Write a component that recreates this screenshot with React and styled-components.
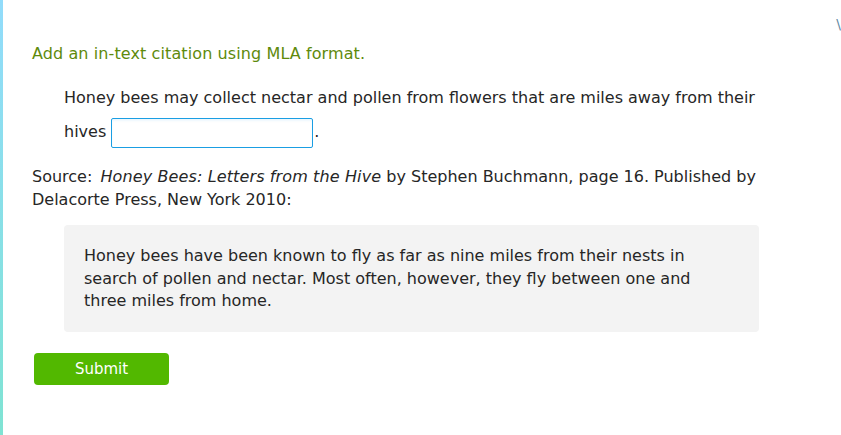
import React from "react"
import styled, { createGlobalStyle } from "styled-components"

const GlobalStyle = createGlobalStyle`
  html, body {
    margin: 0;
    padding: 0;
    background: #ffffff;
  }
  body {
    font-family: "DejaVu Sans", Verdana, sans-serif;
    color: #262626;
  }
`

// card with the coloured strip on its left edge
const Card = styled.div`
  position: relative;
  width: 841px;
  height: 435px;
  box-sizing: border-box;
  border-left: 3px solid transparent;
  border-top-left-radius: 4px;
  border-image: linear-gradient(to bottom, #92dcfb, #7fe3d3) 1;
  padding: 43px 0 0 29px;
  overflow: hidden;
`

const Corner = styled.span`
  position: absolute;
  top: 16px;
  right: 0;
  font-size: 14px;
  color: #5f8aa3;
`

const Prompt = styled.h2`
  margin: 0;
  font-size: 16px;
  font-weight: normal;
  line-height: 22px;
  letter-spacing: 0.1px;
  color: #5e8a0c;
`

const Sentence = styled.p`
  margin: 16px 0 0 32px;
  width: 705px;
  font-size: 16px;
  line-height: 34px;
`

const Blank = styled.input`
  box-sizing: border-box;
  width: 202px;
  height: 30px;
  margin: 0 1px 0 5px;
  vertical-align: middle;
  border: 1px solid #1a9ee3;
  border-radius: 2px;
  box-shadow: inset 0 2px 2px rgba(26, 158, 227, 0.08);
  background: #fff;
  font: inherit;
  outline: none;
`

const Source = styled.p`
  margin: 16px 0 0 0;
  width: 740px;
  font-size: 16px;
  line-height: 23px;
`

const Title = styled.em`
  margin-left: 3px;
  letter-spacing: 0.12px;
`

const Quote = styled.blockquote`
  box-sizing: border-box;
  margin: 14px 0 0 32px;
  width: 695px;
  height: 107px;
  padding: 20px 24px 0 20px;
  background: #f3f3f3;
  border-radius: 4px;
  font-size: 16px;
  line-height: 22.5px;
`

const SubmitButton = styled.button`
  display: block;
  margin: 21px 0 0 2px;
  width: 135px;
  height: 32px;
  border: none;
  border-radius: 4px;
  background: #52b800;
  color: #ffffff;
  font-family: "DejaVu Sans", Verdana, sans-serif;
  font-size: 15px;
  cursor: pointer;
`

export default function App() {
  return (
    <>
      <GlobalStyle />
      <Card>
        <Corner>\</Corner>
        <Prompt>Add an in-text citation using MLA format.</Prompt>
        <Sentence>
          Honey bees may collect nectar and pollen from flowers that are miles away from their hives
          <Blank type="text" aria-label="citation" />.
        </Sentence>
        <Source>
          Source: <Title>Honey Bees: Letters from the Hive</Title> by Stephen Buchmann, page 16. Published by
          Delacorte Press, New York 2010:
        </Source>
        <Quote>
          Honey bees have been known to fly as far as nine miles from their nests in search of pollen and
          nectar. Most often, however, they fly between one and three miles from home.
        </Quote>
        <SubmitButton>Submit</SubmitButton>
      </Card>
    </>
  )
}
